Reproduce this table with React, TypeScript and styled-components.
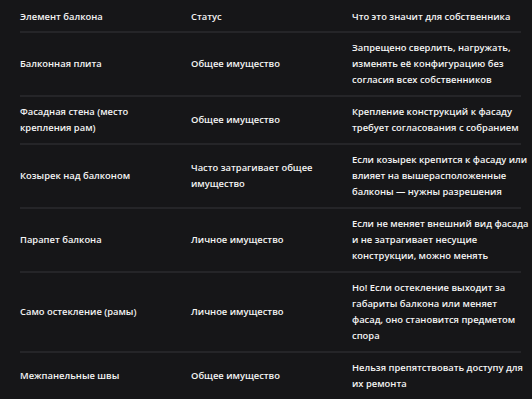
import React from "react";
import styled, { createGlobalStyle } from "styled-components";

const GlobalStyle = createGlobalStyle`
  html, body {
    margin: 0;
    padding: 0;
    background: #161618;
  }
`;

const Page = styled.div`
  padding: 0 11px 0 20px;
  background: #161618;
  min-height: 399px;
  overflow: hidden;
  font-family: "Open Sans", "Noto Sans", sans-serif;
  font-size: 9.4px;
  font-weight: 600;
  color: #f4f4f4;
`;

const Table = styled.table`
  width: 501px;
  border-collapse: collapse;
  table-layout: fixed;
`;

const HeadCell = styled.th<{ $w: number }>`
  box-sizing: border-box;
  width: ${(p) => p.$w}px;
  text-align: left;
  font-weight: 600;
  line-height: 16px;
  white-space: nowrap;
  padding: 9px 0 6px 0;
  border-bottom: 2px solid #252528;
`;

const Cell = styled.td`
  box-sizing: border-box;
  vertical-align: middle;
  line-height: 16px;
  white-space: pre;
  padding: 7px 0;
  border-bottom: 2px solid #252528;
`;

// line breaks follow the wrapping of the original table
const rows: [string, string, string][] = [
  [
    "Балконная плита",
    "Общее имущество",
    "Запрещено сверлить, нагружать,\nизменять её конфигурацию без\nсогласия всех собственников",
  ],
  [
    "Фасадная стена (место\nкрепления рам)",
    "Общее имущество",
    "Крепление конструкций к фасаду\nтребует согласования с собранием",
  ],
  [
    "Козырек над балконом",
    "Часто затрагивает общее\nимущество",
    "Если козырек крепится к фасаду или\nвлияет на вышерасположенные\nбалконы — нужны разрешения",
  ],
  [
    "Парапет балкона",
    "Личное имущество",
    "Если не меняет внешний вид фасада\nи не затрагивает несущие\nконструкции, можно менять",
  ],
  [
    "Само остекление (рамы)",
    "Личное имущество",
    "Но! Если остекление выходит за\nгабариты балкона или меняет\nфасад, оно становится предметом\nспора",
  ],
  [
    "Межпанельные швы",
    "Общее имущество",
    "Нельзя препятствовать доступу для\nих ремонта",
  ],
];

export default function App() {
  return (
    <>
      <GlobalStyle />
      <Page>
        <Table>
          <thead>
            <tr>
              <HeadCell $w={171}>Элемент балкона</HeadCell>
              <HeadCell $w={161}>Статус</HeadCell>
              <HeadCell $w={169}>Что это значит для собственника</HeadCell>
            </tr>
          </thead>
          <tbody>
            {rows.map((r) => (
              <tr key={r[0]}>
                <Cell>{r[0]}</Cell>
                <Cell>{r[1]}</Cell>
                <Cell>{r[2]}</Cell>
              </tr>
            ))}
          </tbody>
        </Table>
      </Page>
    </>
  );
}
